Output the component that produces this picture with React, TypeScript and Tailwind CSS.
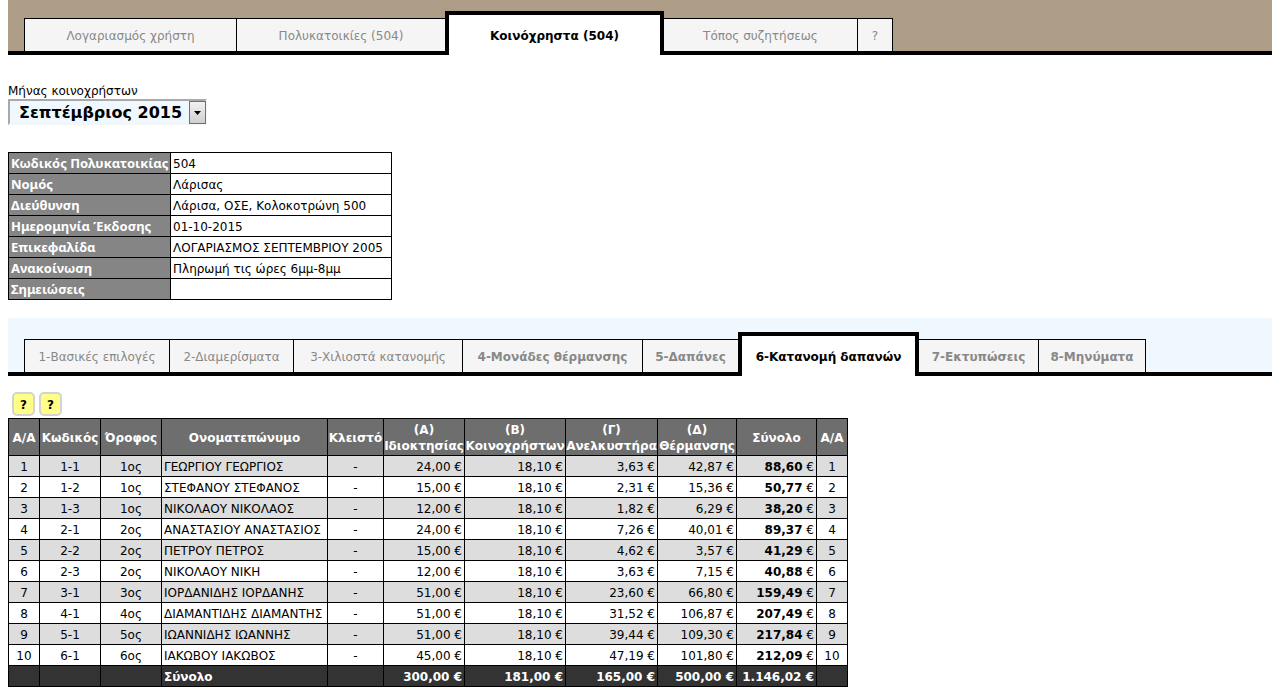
import React, { useState } from "react";
import clsx from "clsx";

interface Tab {
  label: string;
  width: string;
  bold?: boolean;
}

interface Expense {
  code: string;
  floor: string;
  name: string;
  amounts: string[];
  total: string;
}

const mainTabs: Tab[] = [
  { label: "Λογαριασμός χρήστη", width: "w-[212px]" },
  { label: "Πολυκατοικίες (504)", width: "w-[209px]" },
  { label: "Κοινόχρηστα (504)", width: "w-[219px]" },
  { label: "Τόπος συζητήσεως", width: "w-[193px]" },
  { label: "?", width: "w-[36px]" },
];

const stepTabs: Tab[] = [
  { label: "1-Βασικές επιλογές", width: "w-[145px]" },
  { label: "2-Διαμερίσματα", width: "w-[124px]" },
  { label: "3-Χιλιοστά κατανομής", width: "w-[169px]" },
  { label: "4-Μονάδες θέρμανσης", width: "w-[180px]", bold: true },
  { label: "5-Δαπάνες", width: "w-[96px]", bold: true },
  { label: "6-Κατανομή δαπανών", width: "w-[181px]", bold: true },
  { label: "7-Εκτυπώσεις", width: "w-[119px]", bold: true },
  { label: "8-Μηνύματα", width: "w-[108px]", bold: true },
];

const details = [
  ["Κωδικός Πολυκατοικίας", "504"],
  ["Νομός", "Λάρισας"],
  ["Διεύθυνση", "Λάρισα, ΟΣΕ, Κολοκοτρώνη 500"],
  ["Ημερομηνία Έκδοσης", "01-10-2015"],
  ["Επικεφαλίδα", "ΛΟΓΑΡΙΑΣΜΟΣ ΣΕΠΤΕΜΒΡΙΟΥ 2005"],
  ["Ανακοίνωση", "Πληρωμή τις ώρες 6μμ-8μμ"],
  ["Σημειώσεις", ""],
];

const columns = [
  { label: "Α/Α", width: "w-[31px]" },
  { label: "Κωδικός", width: "w-[61px]" },
  { label: "Όροφος", width: "w-[61px]" },
  { label: "Ονοματεπώνυμο", width: "w-[166px]" },
  { label: "Κλειστό", width: "w-[56px]" },
  { group: "(Α)", label: "Ιδιοκτησίας", width: "w-[81px]" },
  { group: "(Β)", label: "Κοινοχρήστων", width: "w-[101px]" },
  { group: "(Γ)", label: "Ανελκυστήρα", width: "w-[92px]" },
  { group: "(Δ)", label: "Θέρμανσης", width: "w-[79px]" },
  { label: "Σύνολο", width: "w-[80px]" },
  { label: "Α/Α", width: "w-[31px]" },
];

const expenses: Expense[] = [
  { code: "1-1", floor: "1ος", name: "ΓΕΩΡΓΙΟΥ ΓΕΩΡΓΙΟΣ", amounts: ["24,00", "18,10", "3,63", "42,87"], total: "88,60" },
  { code: "1-2", floor: "1ος", name: "ΣΤΕΦΑΝΟΥ ΣΤΕΦΑΝΟΣ", amounts: ["15,00", "18,10", "2,31", "15,36"], total: "50,77" },
  { code: "1-3", floor: "1ος", name: "ΝΙΚΟΛΑΟΥ ΝΙΚΟΛΑΟΣ", amounts: ["12,00", "18,10", "1,82", "6,29"], total: "38,20" },
  { code: "2-1", floor: "2ος", name: "ΑΝΑΣΤΑΣΙΟΥ ΑΝΑΣΤΑΣΙΟΣ", amounts: ["24,00", "18,10", "7,26", "40,01"], total: "89,37" },
  { code: "2-2", floor: "2ος", name: "ΠΕΤΡΟΥ ΠΕΤΡΟΣ", amounts: ["15,00", "18,10", "4,62", "3,57"], total: "41,29" },
  { code: "2-3", floor: "2ος", name: "ΝΙΚΟΛΑΟΥ ΝΙΚΗ", amounts: ["12,00", "18,10", "3,63", "7,15"], total: "40,88" },
  { code: "3-1", floor: "3ος", name: "ΙΟΡΔΑΝΙΔΗΣ ΙΟΡΔΑΝΗΣ", amounts: ["51,00", "18,10", "23,60", "66,80"], total: "159,49" },
  { code: "4-1", floor: "4ος", name: "ΔΙΑΜΑΝΤΙΔΗΣ ΔΙΑΜΑΝΤΗΣ", amounts: ["51,00", "18,10", "31,52", "106,87"], total: "207,49" },
  { code: "5-1", floor: "5ος", name: "ΙΩΑΝΝΙΔΗΣ ΙΩΑΝΝΗΣ", amounts: ["51,00", "18,10", "39,44", "109,30"], total: "217,84" },
  { code: "6-1", floor: "6ος", name: "ΙΑΚΩΒΟΥ ΙΑΚΩΒΟΣ", amounts: ["45,00", "18,10", "47,19", "101,80"], total: "212,09" },
];

const totals = ["300,00 €", "181,00 €", "165,00 €", "500,00 €", "1.146,02 €"];

const TabBar = ({
  tabs,
  active,
  onSelect,
  className,
}: {
  tabs: Tab[];
  active: number;
  onSelect: (index: number) => void;
  className: string;
}) => (
  <nav className={clsx("flex items-end border-b-4 border-black pl-4", className)}>
    {tabs.map((tab, i) => (
      <button
        key={tab.label}
        type="button"
        onClick={() => onSelect(i)}
        className={clsx(
          "shrink-0 whitespace-nowrap border-black pt-px",
          tab.width,
          i === active
            ? "-mb-1 h-[44px] border-x-4 border-t-4 bg-white font-bold text-black"
            : "h-[33px] border-t bg-[#f5f5f5] text-[#888888]",
          i !== active && i !== active + 1 && "border-l",
          i !== active && i === tabs.length - 1 && "border-r",
          tab.bold && "font-bold"
        )}
      >
        {tab.label}
      </button>
    ))}
  </nav>
);

const HelpButton = ({ label }: { label: string }) => (
  <button
    type="button"
    aria-label={label}
    className="h-6 w-[23px] rounded-[5px] border-2 border-[#d3d3d3] bg-[#ffff88] pt-px font-bold leading-4"
  >
    ?
  </button>
);

export default function App() {
  const [mainTab, setMainTab] = useState(2);
  const [stepTab, setStepTab] = useState(5);

  return (
    <div className="mx-2 bg-white font-['DejaVu_Sans',sans-serif] text-[12px] leading-4 text-black">
      <TabBar
        tabs={mainTabs}
        active={mainTab}
        onSelect={setMainTab}
        className="bg-[#ad9c86] pt-[11px]"
      />

      <div className="mt-7">
        <label htmlFor="month" className="block">
          Μήνας κοινοχρήστων
        </label>
        <div className="relative w-[199px]">
          <select
            id="month"
            className="block h-[26px] w-full appearance-none border-2 border-t-[#a9a9a9] border-r-[#f5f5f5] border-b-[#f5f5f5] border-l-[#a9a9a9] bg-[#f0f8ff] pt-0.5 pl-[9px] text-[16px] font-bold leading-5"
          >
            <option>Σεπτέμβριος 2015</option>
          </select>
          <span className="pointer-events-none absolute top-0.5 right-px flex h-[23px] w-[17px] items-center justify-center border border-[#707070] bg-linear-to-b from-[#f2f2f2] to-[#cfcfcf]">
            <svg width="7" height="4" viewBox="0 0 7 4">
              <path d="M0 0h7L3.5 4z" fill="#000" />
            </svg>
          </span>
        </div>
      </div>

      <table className="mt-[27px] w-[384px] table-fixed border-collapse whitespace-nowrap">
        <tbody>
          {details.map(([label, value]) => (
            <tr key={label} className="h-[21px]">
              <th
                scope="row"
                className="w-[162px] border border-black bg-[#858585] pl-0.5 text-left font-['Noto_Sans',sans-serif] text-[13px] leading-4 text-white"
              >
                {label}
              </th>
              <td className="border border-black px-0.5 pt-0.5">{value}</td>
            </tr>
          ))}
        </tbody>
      </table>

      <TabBar
        tabs={stepTabs}
        active={stepTab}
        onSelect={setStepTab}
        className="mt-[18px] bg-[#f0f8ff] pt-[14px]"
      />

      <div className="mt-4 flex gap-1 pl-1">
        <HelpButton label="Βοήθεια" />
        <HelpButton label="Οδηγίες" />
      </div>

      <table className="mt-0.5 mb-3 w-[840px] table-fixed border-collapse whitespace-nowrap [&_td]:border [&_td]:border-black [&_td]:px-0.5 [&_td]:pt-0.5 [&_th]:border [&_th]:border-black [&_th]:pt-0.5">
        <thead>
          <tr className="h-[37px] bg-[#6e6e6e] text-white">
            {columns.map((col, i) => (
              <th key={i} scope="col" className={col.width}>
                {col.group && <span className="block">{col.group}</span>}
                {col.label}
              </th>
            ))}
          </tr>
        </thead>
        <tbody>
          {expenses.map((row, i) => (
            <tr key={row.code} className="h-[21px] text-center odd:bg-[#dddddd]">
              <td>{i + 1}</td>
              <td>{row.code}</td>
              <td>{row.floor}</td>
              <td className="text-left">{row.name}</td>
              <td>-</td>
              {row.amounts.map((amount, j) => (
                <td key={j} className="text-right">
                  {amount} €
                </td>
              ))}
              <td className="text-right">
                <b>{row.total}</b> €
              </td>
              <td>{i + 1}</td>
            </tr>
          ))}
        </tbody>
        <tfoot>
          <tr className="h-[21px] bg-[#333333] font-bold text-white">
            <td />
            <td />
            <td />
            <td>Σύνολο</td>
            <td />
            {totals.map((total) => (
              <td key={total} className="text-right">
                {total}
              </td>
            ))}
            <td />
          </tr>
        </tfoot>
      </table>
    </div>
  );
}
